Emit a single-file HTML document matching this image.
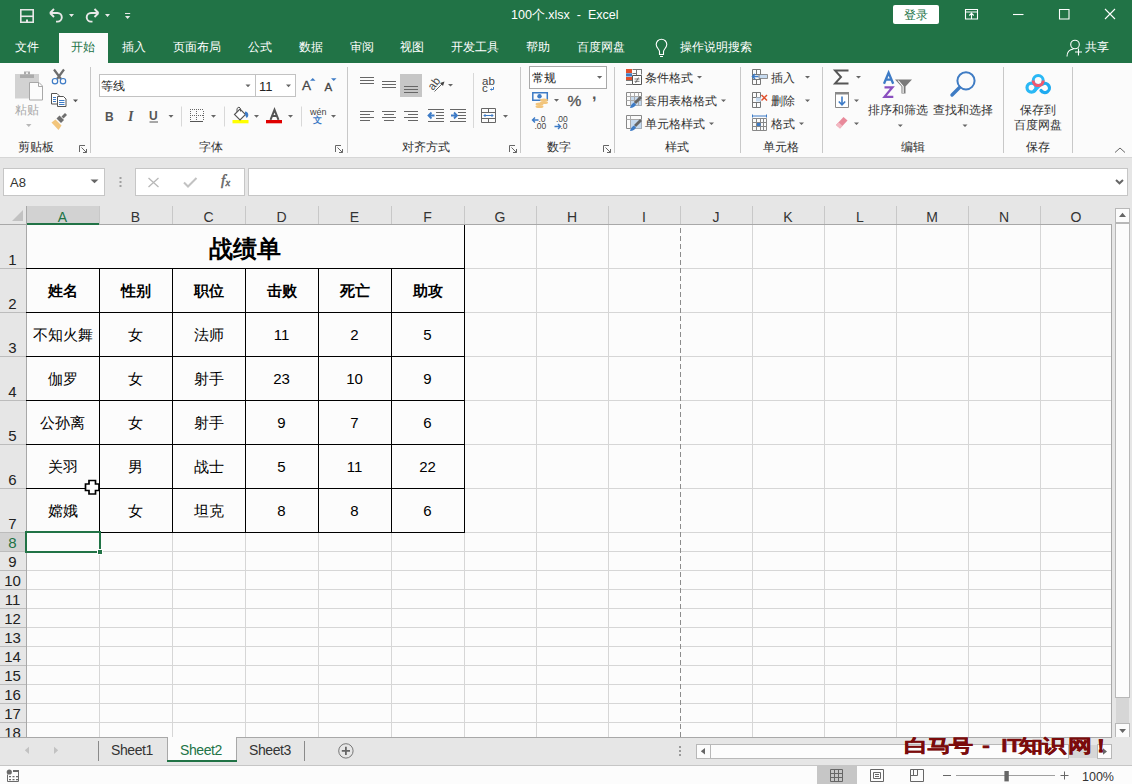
<!DOCTYPE html><html><head><meta charset="utf-8"><style>
*{margin:0;padding:0;box-sizing:border-box}
html,body{width:1132px;height:784px;overflow:hidden;background:#fff;font-family:"Liberation Sans",sans-serif}
body>div, body>svg{position:absolute}
.t{white-space:nowrap;font-size:12px;line-height:12px;color:#444}
.w{color:#fff}
svg{position:absolute;overflow:visible}
</style></head><body>
<div style="left:0px;top:0px;width:1132px;height:63px;background:#217346"></div>
<div style="left:59px;top:33px;width:49px;height:30px;background:#fbfbfb"></div>
<div class="t w" style="left:511px;top:9px;font-size:12.5px;line-height:13px">100个.xlsx&nbsp; -&nbsp; Excel</div>
<div class="t w" style="left:15px;top:41px;">文件</div>
<div class="t w" style="left:122px;top:41px;">插入</div>
<div class="t w" style="left:173px;top:41px;">页面布局</div>
<div class="t w" style="left:248px;top:41px;">公式</div>
<div class="t w" style="left:299px;top:41px;">数据</div>
<div class="t w" style="left:350px;top:41px;">审阅</div>
<div class="t w" style="left:400px;top:41px;">视图</div>
<div class="t w" style="left:451px;top:41px;">开发工具</div>
<div class="t w" style="left:526px;top:41px;">帮助</div>
<div class="t w" style="left:577px;top:41px;">百度网盘</div>
<div class="t w" style="left:680px;top:41px;">操作说明搜索</div>
<div class="t w" style="left:1085px;top:41px;">共享</div>
<div class="t " style="left:71px;top:41px;color:#217346">开始</div>
<svg style="left:0;top:0" width="140" height="30"><path d="M20.8 9.8h12.4v12.4h-12.4z" fill="none" stroke="#e8e8e8" stroke-width="1.6"/><path d="M21 15.5h12v1.6h-12z" fill="#e8e8e8"/><path d="M26 19.5h2v2.7h-2z" fill="#e8e8e8"/><path d="M50 13l4-4M50 13l4 4M50.5 13h7a4.3 4.3 0 0 1 0 8.6h-1.5" fill="none" stroke="#e8e8e8" stroke-width="1.9"/><path d="M98.5 13l-4-4M98.5 13l-4 4M98 13h-7a4.3 4.3 0 0 0 0 8.6h1.5" fill="none" stroke="#e8e8e8" stroke-width="1.9"/><path d="M69 14h5l-2.5 3z M105 14h5l-2.5 3z M125 16h5.2l-2.6 3z" fill="#e8e8e8"/><path d="M125 13.5h5.2" stroke="#e8e8e8" stroke-width="1"/></svg>
<svg style="left:640px;top:0" width="492" height="63"><g fill="none" stroke="#fff" stroke-width="1.1"><path d="M325.5 9.5h12v9.5h-12zM325.5 12h12M331.5 18.5v-5M329.3 15.5l2.2-2.2 2.2 2.2"/><path d="M373 14.5h10.5"/><path d="M419.5 9.5h9.5v9.5h-9.5z"/><path d="M465 9l10 10M475 9l-10 10"/><circle cx="435" cy="44.5" r="4.3"/><path d="M427 56.5c0-4.5 2.5-7 6.5-7.5M438.5 48.5v7M435 52h7"/><path d="M19.5 54.5v-3c0-2-3.3-4-3.3-7a5.3 5.3 0 0 1 10.6 0c0 3-3.3 5-3.3 7v3zM20 56.5h3"/></g></svg>
<div style="left:893px;top:5px;width:46px;height:19px;background:#fff;border-radius:2px"></div>
<div class="t " style="left:904px;top:9px;color:#217346">登录</div>
<div style="left:0px;top:63px;width:1132px;height:94px;background:#fbfbfb"></div>
<div style="left:0px;top:157px;width:1132px;height:1px;background:#d6d6d6"></div>
<div style="left:90px;top:67px;width:1px;height:86px;background:#c8c8c8"></div>
<div style="left:347px;top:67px;width:1px;height:86px;background:#c8c8c8"></div>
<div style="left:520px;top:67px;width:1px;height:86px;background:#c8c8c8"></div>
<div style="left:614px;top:67px;width:1px;height:86px;background:#c8c8c8"></div>
<div style="left:740px;top:67px;width:1px;height:86px;background:#c8c8c8"></div>
<div style="left:822px;top:67px;width:1px;height:86px;background:#c8c8c8"></div>
<div style="left:1003px;top:67px;width:1px;height:86px;background:#c8c8c8"></div>
<div style="left:1072px;top:67px;width:1px;height:86px;background:#c8c8c8"></div>
<div class="t " style="left:18px;top:141px;color:#303030">剪贴板</div>
<div class="t " style="left:199px;top:141px;color:#303030">字体</div>
<div class="t " style="left:402px;top:141px;color:#303030">对齐方式</div>
<div class="t " style="left:547px;top:141px;color:#303030">数字</div>
<div class="t " style="left:665px;top:141px;color:#303030">样式</div>
<div class="t " style="left:763px;top:141px;color:#303030">单元格</div>
<div class="t " style="left:901px;top:141px;color:#303030">编辑</div>
<div class="t " style="left:1026px;top:141px;color:#303030">保存</div>
<svg style="left:0;top:63px" width="90" height="94"><g transform="translate(0,-63)"><path d="M15 74h24v24.5h-24z" fill="#d2d2d2"/><path d="M20 74.5h14v3.5h-14z" fill="#ababab"/><path d="M24 71.5h6v3h-6z" fill="#ababab"/><path d="M26 72.3h2v1.6h-2z" fill="#f0f0f0"/><path d="M29.5 82.5h9.5l3.5 3.5v14h-13z" fill="#fcfcfc" stroke="#a8a8a8" stroke-width="1"/><path d="M38.5 82.5v4h4" fill="none" stroke="#a8a8a8"/><path d="M26 124h5.5l-2.75 3z" fill="#b8b8b8"/><path d="M54 69.5l7 9.5M64 69.5l-7 9.5" stroke="#6d6d6d" stroke-width="2.2"/><circle cx="55" cy="81.2" r="2.7" fill="none" stroke="#3d7bc6" stroke-width="1.2"/><circle cx="63" cy="81.2" r="2.7" fill="none" stroke="#3d7bc6" stroke-width="1.2"/><path d="M51.5 93.5h5.5l2 2v8.5h-7.5z" fill="#fff" stroke="#555"/><path d="M53 97.5h3M53 99.5h3M53 101.5h3" stroke="#3d7bc6"/><path d="M57.5 96.5h6l2.5 2.5v7.5h-8.5z" fill="#fff" stroke="#555"/><path d="M59 100.5h5.5M59 102.5h5.5M59 104.5h5.5" stroke="#3d7bc6"/><path d="M73 99.5h5l-2.5 2.8z" fill="#555"/><path d="M51.5 122.5l4-3 6 6-3 4.5z" fill="#f2c57c"/><path d="M56.5 118.5l3-3 4.5 4.5-3 3z" fill="#6f6f6f"/><path d="M61.5 116.5l3.5-3.5 2 2-3.5 3.5z" fill="#6f6f6f"/></g></svg>
<div class="t " style="left:15px;top:104px;color:#a8a8a8">粘贴</div>
<div style="left:99px;top:74px;width:197px;height:23px;background:#fff;border:1px solid #c2c2c2"></div>
<div style="left:255px;top:74px;width:1px;height:23px;background:#c2c2c2"></div>
<div class="t " style="left:101px;top:80px;color:#222">等线</div>
<div class="t " style="left:259px;top:80px;font-size:13px;line-height:13px;color:#222">11</div>
<svg style="left:0;top:0" width="360" height="160"><path d="M245.5 84.5h5l-2.5 2.8zM286 84.5h5l-2.5 2.8zM168.5 115h5l-2.5 2.8zM211 115h5l-2.5 2.8zM254 115h5l-2.5 2.8zM288 115h5l-2.5 2.8zM331 115h5l-2.5 2.8z" fill="#666"/><path d="M310 80.8h5.5l-2.75-2.8z" fill="#3d7bc6"/><path d="M331 78.2h5.5l-2.75 2.8z" fill="#3d7bc6"/><path d="M181.5 106.5v20M224.5 106.5v20M301.5 106.5v20" stroke="#d8d8d8"/><path d="M190 109.5h14M190 115.5h14M190.5 111v10M196.5 111v4M196.5 117v4M203.5 111v10" stroke="#666" stroke-dasharray="1 1"/><path d="M190 121.5h13" stroke="#555"/><path d="M232.5 120h16v3.3h-16zM266 120h16v3.3h-16z" fill="none"/><rect x="232.5" y="120" width="16" height="3.3" fill="#ffff00"/><rect x="266" y="120" width="16" height="3.3" fill="#e00000"/><path d="M234.5 114.5l5.5-5.5 5.5 5.5-5.5 5.5z" fill="#fff" stroke="#555" stroke-width="1.1"/><path d="M237 112v-3.5l2-1.5 1.5 1.5v3" fill="none" stroke="#555" stroke-width="1"/><path d="M245 111.5c2 0 3.3 1.5 3.3 3.5 0 1.5-1 2.5-1.8 3l-1.5-3.5z" fill="#3d7bc6"/><path d="M270.5 119.8l4-10 4 10M272 116h5" fill="none" stroke="#555" stroke-width="2"/><path d="M149.5 122h8.5" stroke="#555" stroke-width="1"/></svg>
<div class="t " style="left:105px;top:111px;font-size:12px;line-height:12px;font-weight:bold;color:#555">B</div>
<div class="t " style="left:128px;top:110px;font-family:Liberation Serif,serif;font-style:italic;font-size:14px;line-height:13px;font-weight:bold;color:#555">I</div>
<div class="t " style="left:149px;top:110px;font-size:12px;line-height:12px;font-weight:bold;color:#555">U</div>
<div class="t " style="left:302px;top:79px;font-size:13.5px;line-height:13.5px;color:#444;-webkit-text-stroke:0.3px #444">A</div>
<div class="t " style="left:324.5px;top:82px;font-size:11.5px;line-height:11.5px;color:#444;-webkit-text-stroke:0.3px #444">A</div>
<div class="t " style="left:310px;top:108px;font-size:9px;line-height:9px;color:#444">wén</div>
<div class="t " style="left:313px;top:116px;font-size:8.5px;line-height:8.5px;color:#3d7bc6;font-weight:bold">文</div>
<div style="left:400px;top:74px;width:22px;height:23px;background:#c6c6c6"></div>
<svg style="left:0;top:0" width="620" height="160"><g stroke="#666" stroke-width="1" fill="none"><path d="M360 77.5h14M360 80.5h14M360 83.5h14"/><path d="M382 81.5h14M382 84.5h14M382 87.5h14"/><path d="M404 86.5h14M404 89.5h14M404 92.5h14"/><path d="M360 111.5h14M360 114.5h10M360 117.5h14M360 120.5h10"/><path d="M382 111.5h14M384 114.5h10M382 117.5h14M384 120.5h10"/><path d="M404 111.5h14M408 114.5h10M404 117.5h14M408 120.5h10"/><path d="M428 109.5h16M436 112.5h8M436 115.5h8M436 118.5h8M428 121.5h16"/><path d="M450 109.5h16M458 112.5h8M458 115.5h8M458 118.5h8M450 121.5h16"/><path d="M481.5 108.5h14v14h-14zM481.5 112.5h14M481.5 118.5h14M488.5 108.5v4M488.5 118.5v4"/><path d="M434.5 91.5l9.5-9.5"/><path d="M473.5 73v55" stroke="#d8d8d8"/></g><path d="M428.5 115.5h6M431.5 112.5l-3 3 3 3M451 115.5h6M454 112.5l3 3-3 3" fill="none" stroke="#3d7bc6" stroke-width="1.8"/><path d="M484 115.5h9M485.5 114l-1.5 1.5 1.5 1.5M491.5 114l1.5 1.5-1.5 1.5" fill="none" stroke="#3d7bc6" stroke-width="1"/><path d="M493.5 87v2.5h-3M491.5 88.5l-1 1 1 1" fill="none" stroke="#3d7bc6" stroke-width="1"/><path d="M444.5 81.5l-1.5 4.5-3-3z" fill="#444"/><path d="M448 84h5l-2.5 2.5zM503 115h5l-2.5 2.8z" fill="#666"/><text x="0" y="0" transform="translate(433,91) rotate(-52)" font-size="11.5" font-family="Liberation Sans" fill="#444">ab</text></svg>
<div class="t " style="left:482px;top:76px;font-size:11.5px;line-height:11.5px;color:#444">ab</div>
<div class="t " style="left:482px;top:83px;font-size:11.5px;line-height:11.5px;color:#444">c</div>
<div style="left:529px;top:66px;width:78px;height:23px;background:#fff;border:1px solid #a9a9a9"></div>
<div class="t " style="left:532px;top:72px;color:#222">常规</div>
<svg style="left:0;top:0" width="620" height="160"><path d="M597 76h5.2l-2.6 2.8zM554 99h5l-2.5 2.8z" fill="#666"/><path d="M532.8 92.8h14.5v7.5h-14.5z" fill="none" stroke="#3d7bc6" stroke-width="1.5"/><circle cx="539.5" cy="96.3" r="2.2" fill="#3d7bc6"/><ellipse cx="544" cy="100" rx="4" ry="1.6" fill="#f2c57c"/><ellipse cx="544" cy="102.5" rx="4" ry="1.6" fill="#f2c57c"/><ellipse cx="539.5" cy="104" rx="4" ry="1.6" fill="#f2c57c"/><ellipse cx="539.5" cy="106.5" rx="4" ry="1.5" fill="#f2c57c"/><path d="M532.5 120h6M535 117.5l-2.5 2.5 2.5 2.5M554.5 126.5h6M558 124l2.5 2.5-2.5 2.5" fill="none" stroke="#3d7bc6" stroke-width="1.4"/></svg>
<div class="t " style="left:567.5px;top:93px;font-size:15.5px;line-height:15px;color:#555;-webkit-text-stroke:0.35px #555">%</div>
<div class="t " style="left:592px;top:86px;font-size:16px;line-height:16px;color:#555;font-weight:bold">,</div>
<div class="t " style="left:538.5px;top:115px;font-size:8.5px;line-height:8.5px;color:#444">.0</div>
<div class="t " style="left:534.5px;top:122px;font-size:8.5px;line-height:8.5px;color:#444">.00</div>
<div class="t " style="left:556px;top:115px;font-size:8.5px;line-height:8.5px;color:#444">.00</div>
<div class="t " style="left:560.5px;top:122px;font-size:8.5px;line-height:8.5px;color:#444">.0</div>
<div class="t " style="left:645px;top:72px;color:#333">条件格式</div>
<div class="t " style="left:645px;top:95px;color:#333">套用表格格式</div>
<div class="t " style="left:645px;top:118px;color:#333">单元格样式</div>
<div class="t " style="left:771px;top:72px;color:#333">插入</div>
<div class="t " style="left:771px;top:95px;color:#333">删除</div>
<div class="t " style="left:771px;top:118px;color:#333">格式</div>
<svg style="left:0;top:0" width="880" height="160"><path d="M697 76h5l-2.5 2.5zM721 99.5h5l-2.5 2.5zM709 122.5h5l-2.5 2.5zM805 76h5l-2.5 2.5zM805 99.5h5l-2.5 2.5zM799 122.5h5l-2.5 2.5zM856 76h5l-2.5 2.5zM854 99.5h5l-2.5 2.5zM854 122.5h5l-2.5 2.5z" fill="#666"/><path d="M626 69h6v4h-6zM626 77h6v3.5h-6z" fill="#e0502d"/><path d="M626 73.3h6v3.2h-6z" fill="#3d7bc6"/><path d="M632.5 69.5h9M632.5 73.5h4M636.5 69v6M641.5 69v5.5M626 80.5h6M626 84.5h6" fill="none" stroke="#777"/><path d="M632.5 75.5h9v9h-9z" fill="#fff" stroke="#555"/><path d="M634.5 79h5M634.5 81.3h5M638.5 77.5l-3 5.5" stroke="#555" stroke-width="0.8"/><path d="M626.5 92.5h15v13h-15z" fill="none" stroke="#888"/><path d="M630.5 96.5h11v9h-11z" fill="#c5d9ee"/><path d="M626.5 96.5h15M626.5 100.5h15M630.5 92.5v13M634.5 92.5v13M638.5 92.5v13" fill="none" stroke="#aaa"/><path d="M640 96l2 2-6 6-2-2z" fill="#666"/><path d="M634 102.5l2 2c-1 2-3 3.5-6 3.5 0.5-2.5 2-4.5 4-5.5z" fill="#3d7bc6"/><path d="M626.5 115.5h15v13h-15z" fill="none" stroke="#888"/><path d="M630.5 119.5h11v9h-11z" fill="#c5d9ee"/><path d="M626.5 119.5h15M630.5 115.5v13" fill="none" stroke="#aaa"/><path d="M640 119l2 2-6 6-2-2z" fill="#666"/><path d="M634 125.5l2 2c-1 2-3 3.5-6 3.5 0.5-2.5 2-4.5 4-5.5z" fill="#3d7bc6"/><path d="M752.5 69.5h8v15h-8zM752.5 74.5h8M752.5 79.5h8M756.5 69.5v5M756.5 79.5v5" fill="none" stroke="#777"/><path d="M759 74.5h8.5v4h-8.5z" fill="#c5d9ee" stroke="#777" stroke-width="0.8"/><path d="M752.5 76.5h6M755 74l-2.5 2.5 2.5 2.5" fill="none" stroke="#3d7bc6" stroke-width="1.5"/><path d="M752.5 92.5h8v15h-8zM752.5 97.5h8M752.5 102.5h8M756.5 92.5v5M756.5 102.5v5" fill="none" stroke="#777"/><path d="M756 97.5h5v4h-5z" fill="#c5d9ee"/><path d="M761.5 95l5.5 5.5M767 95l-5.5 5.5" stroke="#e0502d" stroke-width="1.5"/><path d="M752.5 118.5h14v12h-14zM752.5 122.5h14M752.5 126.5h14M756.5 118.5v12M760.5 118.5v12M763.5 118.5v12" fill="none" stroke="#888"/><path d="M757 123h3.5v3h-3.5z" fill="#3d7bc6"/><path d="M752.5 116h14M752.5 114.5v3M766.5 114.5v3" fill="none" stroke="#3d7bc6"/><path d="M848.5 70.5h-13.5l6 6.5-6 6.5h13.5" fill="none" stroke="#555" stroke-width="1.9" stroke-linejoin="miter"/><path d="M835.5 92.5h13v15h-13z" fill="#fff" stroke="#888"/><path d="M835 92h14v2.5h-14z" fill="#888"/><path d="M842 96.5v8M838.8 101.5l3.2 3.3 3.2-3.3" fill="none" stroke="#3d7bc6" stroke-width="1.6"/><path d="M836 125l7.5-8 4 3.5-7.5 8z" fill="#e8899a"/><path d="M836 125l2.5-2.7 4 3.5-2.5 2.7z" fill="#f2b8c2"/></svg>
<div class="t " style="left:868px;top:104px;color:#333">排序和筛选</div>
<div class="t " style="left:933px;top:104px;color:#333">查找和选择</div>
<div class="t " style="left:1020px;top:104px;color:#333">保存到</div>
<div class="t " style="left:1014px;top:119px;color:#333">百度网盘</div>
<svg style="left:0;top:0" width="1132" height="160"><path d="M897.8 124.5h5l-2.5 2.5zM962.5 124.5h5l-2.5 2.5z" fill="#666"/><path d="M884 83.7l4.6-11 4.6 11M885.8 79.6h5.6" fill="none" stroke="#3d7bc6" stroke-width="2.3"/><path d="M884.5 87.3h8l-8 9.5h8.8" fill="none" stroke="#8a4fbf" stroke-width="2.2"/><path d="M895 79.5h17l-6.5 7v7h-4v-7z" fill="#7a7a7a"/><path d="M897.5 80.5l5 6v6.5h1.2v-6.8l-5-5.7z" fill="#fff"/><circle cx="966" cy="80.8" r="8.6" fill="none" stroke="#3f7cc4" stroke-width="2"/><path d="M959.5 87.5l-7.5 7.5" stroke="#3f7cc4" stroke-width="3.4" stroke-linecap="round"/><circle cx="1031.5" cy="87.6" r="4.5" fill="none" stroke="#2ab8f5" stroke-width="3.2"/><path d="M1042.5 84a4.6 4.6 0 1 1 -1.5 6.5" fill="none" stroke="#1eaaf0" stroke-width="3.2" stroke-linecap="round"/><path d="M1033.5 91.5l6-6" stroke="#2ab8f5" stroke-width="3.2"/><circle cx="1038.2" cy="80.6" r="5" fill="none" stroke="#2ab8f5" stroke-width="3"/><path d="M1033.2 80.6a5 5 0 0 0 10 0" fill="none" stroke="#f4566c" stroke-width="3"/><path d="M1115 152.5l5-4.5 5 4.5" fill="none" stroke="#666" stroke-width="1"/></svg>
<svg style="left:0;top:0" width="700" height="160"><path d="M79.5 152V145.5h5.5M81.5 147.5l5 5M86.5 149v3.5h-3.5" fill="none" stroke="#666" stroke-width="1"/><path d="M335.5 152V145.5h5.5M337.5 147.5l5 5M342.5 149v3.5h-3.5" fill="none" stroke="#666" stroke-width="1"/><path d="M509.5 152V145.5h5.5M511.5 147.5l5 5M516.5 149v3.5h-3.5" fill="none" stroke="#666" stroke-width="1"/><path d="M603.5 152V145.5h5.5M605.5 147.5l5 5M610.5 149v3.5h-3.5" fill="none" stroke="#666" stroke-width="1"/></svg>
<div style="left:0px;top:158px;width:1132px;height:48px;background:#e6e6e6"></div>
<div style="left:3px;top:168px;width:102px;height:28px;background:#fff;border:1px solid #c6c6c6"></div>
<div class="t " style="left:10px;top:176px;font-size:13px;line-height:13px;color:#333">A8</div>
<div style="left:135px;top:168px;width:110px;height:28px;background:#fff;border:1px solid #c6c6c6"></div>
<div style="left:248px;top:168px;width:880px;height:28px;background:#fff;border:1px solid #c6c6c6"></div>
<svg style="left:0;top:158px" width="1132" height="48"><g transform="translate(0,-158)"><path d="M90.5 179.5h8l-4 3.8z" fill="#666"/><path d="M119.5 177h2v2h-2zM119.5 181h2v2h-2zM119.5 185h2v2h-2z" fill="#a0a0a0"/><path d="M148.5 178l10 9M158.5 178l-10 9" stroke="#b8b8b8" stroke-width="1.3"/><path d="M184 182.5l4 4 8.5-8.5" fill="none" stroke="#c2c2c2" stroke-width="2"/><path d="M1116 180l3.5 3.3 3.5-3.3" fill="none" stroke="#666" stroke-width="2"/></g></svg>
<div class="t " style="left:221px;top:173px;font-family:Liberation Serif,serif;font-style:italic;font-size:15px;line-height:14px;color:#666;-webkit-text-stroke:0.5px #666">f</div>
<div class="t " style="left:225.5px;top:177.5px;font-family:Liberation Serif,serif;font-style:italic;font-size:10.5px;line-height:10px;color:#666;-webkit-text-stroke:0.4px #666">x</div>
<div style="left:0px;top:206px;width:1132px;height:19px;background:#e6e6e6"></div>
<div style="left:0px;top:225px;width:26px;height:512px;background:#e6e6e6"></div>
<div style="left:26px;top:225px;width:1086px;height:512px;background:#fcfcfc"></div>
<div style="left:99px;top:269px;width:1px;height:468px;background:#d6d6d6"></div>
<div style="left:99px;top:206px;width:1px;height:18px;background:#c8c8c8"></div>
<div style="left:172px;top:269px;width:1px;height:468px;background:#d6d6d6"></div>
<div style="left:172px;top:206px;width:1px;height:18px;background:#c8c8c8"></div>
<div style="left:245px;top:269px;width:1px;height:468px;background:#d6d6d6"></div>
<div style="left:245px;top:206px;width:1px;height:18px;background:#c8c8c8"></div>
<div style="left:318px;top:269px;width:1px;height:468px;background:#d6d6d6"></div>
<div style="left:318px;top:206px;width:1px;height:18px;background:#c8c8c8"></div>
<div style="left:391px;top:269px;width:1px;height:468px;background:#d6d6d6"></div>
<div style="left:391px;top:206px;width:1px;height:18px;background:#c8c8c8"></div>
<div style="left:464px;top:269px;width:1px;height:468px;background:#d6d6d6"></div>
<div style="left:464px;top:206px;width:1px;height:18px;background:#c8c8c8"></div>
<div style="left:536px;top:225px;width:1px;height:512px;background:#d6d6d6"></div>
<div style="left:536px;top:206px;width:1px;height:18px;background:#c8c8c8"></div>
<div style="left:608px;top:225px;width:1px;height:512px;background:#d6d6d6"></div>
<div style="left:608px;top:206px;width:1px;height:18px;background:#c8c8c8"></div>
<div style="left:680px;top:206px;width:1px;height:18px;background:#c8c8c8"></div>
<div style="left:752px;top:225px;width:1px;height:512px;background:#d6d6d6"></div>
<div style="left:752px;top:206px;width:1px;height:18px;background:#c8c8c8"></div>
<div style="left:824px;top:225px;width:1px;height:512px;background:#d6d6d6"></div>
<div style="left:824px;top:206px;width:1px;height:18px;background:#c8c8c8"></div>
<div style="left:896px;top:225px;width:1px;height:512px;background:#d6d6d6"></div>
<div style="left:896px;top:206px;width:1px;height:18px;background:#c8c8c8"></div>
<div style="left:968px;top:225px;width:1px;height:512px;background:#d6d6d6"></div>
<div style="left:968px;top:206px;width:1px;height:18px;background:#c8c8c8"></div>
<div style="left:1040px;top:225px;width:1px;height:512px;background:#d6d6d6"></div>
<div style="left:1040px;top:206px;width:1px;height:18px;background:#c8c8c8"></div>
<div style="left:1112px;top:225px;width:1px;height:512px;background:#d6d6d6"></div>
<div style="left:1112px;top:206px;width:1px;height:18px;background:#c8c8c8"></div>
<div style="left:26px;top:268px;width:1086px;height:1px;background:#d6d6d6"></div>
<div style="left:0px;top:268px;width:26px;height:1px;background:#bcbcbc"></div>
<div style="left:26px;top:312px;width:1086px;height:1px;background:#d6d6d6"></div>
<div style="left:0px;top:312px;width:26px;height:1px;background:#bcbcbc"></div>
<div style="left:26px;top:356px;width:1086px;height:1px;background:#d6d6d6"></div>
<div style="left:0px;top:356px;width:26px;height:1px;background:#bcbcbc"></div>
<div style="left:26px;top:400px;width:1086px;height:1px;background:#d6d6d6"></div>
<div style="left:0px;top:400px;width:26px;height:1px;background:#bcbcbc"></div>
<div style="left:26px;top:444px;width:1086px;height:1px;background:#d6d6d6"></div>
<div style="left:0px;top:444px;width:26px;height:1px;background:#bcbcbc"></div>
<div style="left:26px;top:488px;width:1086px;height:1px;background:#d6d6d6"></div>
<div style="left:0px;top:488px;width:26px;height:1px;background:#bcbcbc"></div>
<div style="left:26px;top:532px;width:1086px;height:1px;background:#d6d6d6"></div>
<div style="left:0px;top:532px;width:26px;height:1px;background:#bcbcbc"></div>
<div style="left:26px;top:551px;width:1086px;height:1px;background:#d6d6d6"></div>
<div style="left:0px;top:551px;width:26px;height:1px;background:#bcbcbc"></div>
<div style="left:26px;top:570px;width:1086px;height:1px;background:#d6d6d6"></div>
<div style="left:0px;top:570px;width:26px;height:1px;background:#bcbcbc"></div>
<div style="left:26px;top:589px;width:1086px;height:1px;background:#d6d6d6"></div>
<div style="left:0px;top:589px;width:26px;height:1px;background:#bcbcbc"></div>
<div style="left:26px;top:608px;width:1086px;height:1px;background:#d6d6d6"></div>
<div style="left:0px;top:608px;width:26px;height:1px;background:#bcbcbc"></div>
<div style="left:26px;top:627px;width:1086px;height:1px;background:#d6d6d6"></div>
<div style="left:0px;top:627px;width:26px;height:1px;background:#bcbcbc"></div>
<div style="left:26px;top:646px;width:1086px;height:1px;background:#d6d6d6"></div>
<div style="left:0px;top:646px;width:26px;height:1px;background:#bcbcbc"></div>
<div style="left:26px;top:665px;width:1086px;height:1px;background:#d6d6d6"></div>
<div style="left:0px;top:665px;width:26px;height:1px;background:#bcbcbc"></div>
<div style="left:26px;top:684px;width:1086px;height:1px;background:#d6d6d6"></div>
<div style="left:0px;top:684px;width:26px;height:1px;background:#bcbcbc"></div>
<div style="left:26px;top:703px;width:1086px;height:1px;background:#d6d6d6"></div>
<div style="left:0px;top:703px;width:26px;height:1px;background:#bcbcbc"></div>
<div style="left:26px;top:722px;width:1086px;height:1px;background:#d6d6d6"></div>
<div style="left:0px;top:722px;width:26px;height:1px;background:#bcbcbc"></div>
<div style="left:0px;top:224px;width:1112px;height:1px;background:#a8a8a8"></div>
<div style="left:26px;top:206px;width:1px;height:531px;background:#a8a8a8"></div>
<svg style="left:0;top:206px" width="26" height="18"><path d="M23 4v11h-11z" fill="#c2c2c2"/></svg>
<div style="left:27px;top:206px;width:72px;height:18px;background:#d2d2d2"></div>
<div style="left:27px;top:223px;width:72px;height:2px;background:#217346"></div>
<div style="left:0px;top:533px;width:26px;height:18px;background:#d2d2d2"></div>
<div class="t" style="left:26px;top:209.5px;width:73px;text-align:center;font-size:14px;line-height:14px;color:#217346">A</div>
<div class="t" style="left:99px;top:209.5px;width:73px;text-align:center;font-size:14px;line-height:14px;color:#333">B</div>
<div class="t" style="left:172px;top:209.5px;width:73px;text-align:center;font-size:14px;line-height:14px;color:#333">C</div>
<div class="t" style="left:245px;top:209.5px;width:73px;text-align:center;font-size:14px;line-height:14px;color:#333">D</div>
<div class="t" style="left:318px;top:209.5px;width:73px;text-align:center;font-size:14px;line-height:14px;color:#333">E</div>
<div class="t" style="left:391px;top:209.5px;width:73px;text-align:center;font-size:14px;line-height:14px;color:#333">F</div>
<div class="t" style="left:464px;top:209.5px;width:72px;text-align:center;font-size:14px;line-height:14px;color:#333">G</div>
<div class="t" style="left:536px;top:209.5px;width:72px;text-align:center;font-size:14px;line-height:14px;color:#333">H</div>
<div class="t" style="left:608px;top:209.5px;width:72px;text-align:center;font-size:14px;line-height:14px;color:#333">I</div>
<div class="t" style="left:680px;top:209.5px;width:72px;text-align:center;font-size:14px;line-height:14px;color:#333">J</div>
<div class="t" style="left:752px;top:209.5px;width:72px;text-align:center;font-size:14px;line-height:14px;color:#333">K</div>
<div class="t" style="left:824px;top:209.5px;width:72px;text-align:center;font-size:14px;line-height:14px;color:#333">L</div>
<div class="t" style="left:896px;top:209.5px;width:72px;text-align:center;font-size:14px;line-height:14px;color:#333">M</div>
<div class="t" style="left:968px;top:209.5px;width:72px;text-align:center;font-size:14px;line-height:14px;color:#333">N</div>
<div class="t" style="left:1040px;top:209.5px;width:72px;text-align:center;font-size:14px;line-height:14px;color:#333">O</div>
<div class="t" style="left:0px;top:252px;width:25px;text-align:center;font-size:15px;line-height:15px;color:#222">1</div>
<div class="t" style="left:0px;top:296px;width:25px;text-align:center;font-size:15px;line-height:15px;color:#222">2</div>
<div class="t" style="left:0px;top:340px;width:25px;text-align:center;font-size:15px;line-height:15px;color:#222">3</div>
<div class="t" style="left:0px;top:384px;width:25px;text-align:center;font-size:15px;line-height:15px;color:#222">4</div>
<div class="t" style="left:0px;top:428px;width:25px;text-align:center;font-size:15px;line-height:15px;color:#222">5</div>
<div class="t" style="left:0px;top:472px;width:25px;text-align:center;font-size:15px;line-height:15px;color:#222">6</div>
<div class="t" style="left:0px;top:516px;width:25px;text-align:center;font-size:15px;line-height:15px;color:#222">7</div>
<div class="t" style="left:0px;top:535px;width:25px;text-align:center;font-size:15px;line-height:15px;color:#217346">8</div>
<div class="t" style="left:0px;top:554px;width:25px;text-align:center;font-size:15px;line-height:15px;color:#222">9</div>
<div class="t" style="left:0px;top:573px;width:25px;text-align:center;font-size:15px;line-height:15px;color:#222">10</div>
<div class="t" style="left:0px;top:592px;width:25px;text-align:center;font-size:15px;line-height:15px;color:#222">11</div>
<div class="t" style="left:0px;top:611px;width:25px;text-align:center;font-size:15px;line-height:15px;color:#222">12</div>
<div class="t" style="left:0px;top:630px;width:25px;text-align:center;font-size:15px;line-height:15px;color:#222">13</div>
<div class="t" style="left:0px;top:649px;width:25px;text-align:center;font-size:15px;line-height:15px;color:#222">14</div>
<div class="t" style="left:0px;top:668px;width:25px;text-align:center;font-size:15px;line-height:15px;color:#222">15</div>
<div class="t" style="left:0px;top:687px;width:25px;text-align:center;font-size:15px;line-height:15px;color:#222">16</div>
<div class="t" style="left:0px;top:706px;width:25px;text-align:center;font-size:15px;line-height:15px;color:#222">17</div>
<div class="t" style="left:0px;top:725px;width:25px;text-align:center;font-size:15px;line-height:15px;color:#222">18</div>
<div style="left:26px;top:268px;width:439px;height:1px;background:#000"></div>
<div style="left:26px;top:312px;width:439px;height:1px;background:#000"></div>
<div style="left:26px;top:356px;width:439px;height:1px;background:#000"></div>
<div style="left:26px;top:400px;width:439px;height:1px;background:#000"></div>
<div style="left:26px;top:444px;width:439px;height:1px;background:#000"></div>
<div style="left:26px;top:488px;width:439px;height:1px;background:#000"></div>
<div style="left:26px;top:532px;width:439px;height:1px;background:#000"></div>
<div style="left:464px;top:225px;width:1px;height:308px;background:#000"></div>
<div style="left:99px;top:268px;width:1px;height:265px;background:#000"></div>
<div style="left:172px;top:268px;width:1px;height:265px;background:#000"></div>
<div style="left:245px;top:268px;width:1px;height:265px;background:#000"></div>
<div style="left:318px;top:268px;width:1px;height:265px;background:#000"></div>
<div style="left:391px;top:268px;width:1px;height:265px;background:#000"></div>
<div class="t " style="left:26px;top:236.5px;width:438px;text-align:center;font-size:24px;line-height:24px;font-weight:bold;color:#000">战绩单</div>
<div class="t" style="left:26px;top:283px;width:73px;text-align:center;font-size:15px;line-height:15px;color:#000;font-weight:bold;">姓名</div>
<div class="t" style="left:99px;top:283px;width:73px;text-align:center;font-size:15px;line-height:15px;color:#000;font-weight:bold;">性别</div>
<div class="t" style="left:172px;top:283px;width:73px;text-align:center;font-size:15px;line-height:15px;color:#000;font-weight:bold;">职位</div>
<div class="t" style="left:245px;top:283px;width:73px;text-align:center;font-size:15px;line-height:15px;color:#000;font-weight:bold;">击败</div>
<div class="t" style="left:318px;top:283px;width:73px;text-align:center;font-size:15px;line-height:15px;color:#000;font-weight:bold;">死亡</div>
<div class="t" style="left:391px;top:283px;width:73px;text-align:center;font-size:15px;line-height:15px;color:#000;font-weight:bold;">助攻</div>
<div class="t" style="left:26px;top:327px;width:73px;text-align:center;font-size:15px;line-height:15px;color:#000;">不知火舞</div>
<div class="t" style="left:99px;top:327px;width:73px;text-align:center;font-size:15px;line-height:15px;color:#000;">女</div>
<div class="t" style="left:172px;top:327px;width:73px;text-align:center;font-size:15px;line-height:15px;color:#000;">法师</div>
<div class="t" style="left:245px;top:327px;width:73px;text-align:center;font-size:15px;line-height:15px;color:#000;">11</div>
<div class="t" style="left:318px;top:327px;width:73px;text-align:center;font-size:15px;line-height:15px;color:#000;">2</div>
<div class="t" style="left:391px;top:327px;width:73px;text-align:center;font-size:15px;line-height:15px;color:#000;">5</div>
<div class="t" style="left:26px;top:371px;width:73px;text-align:center;font-size:15px;line-height:15px;color:#000;">伽罗</div>
<div class="t" style="left:99px;top:371px;width:73px;text-align:center;font-size:15px;line-height:15px;color:#000;">女</div>
<div class="t" style="left:172px;top:371px;width:73px;text-align:center;font-size:15px;line-height:15px;color:#000;">射手</div>
<div class="t" style="left:245px;top:371px;width:73px;text-align:center;font-size:15px;line-height:15px;color:#000;">23</div>
<div class="t" style="left:318px;top:371px;width:73px;text-align:center;font-size:15px;line-height:15px;color:#000;">10</div>
<div class="t" style="left:391px;top:371px;width:73px;text-align:center;font-size:15px;line-height:15px;color:#000;">9</div>
<div class="t" style="left:26px;top:415px;width:73px;text-align:center;font-size:15px;line-height:15px;color:#000;">公孙离</div>
<div class="t" style="left:99px;top:415px;width:73px;text-align:center;font-size:15px;line-height:15px;color:#000;">女</div>
<div class="t" style="left:172px;top:415px;width:73px;text-align:center;font-size:15px;line-height:15px;color:#000;">射手</div>
<div class="t" style="left:245px;top:415px;width:73px;text-align:center;font-size:15px;line-height:15px;color:#000;">9</div>
<div class="t" style="left:318px;top:415px;width:73px;text-align:center;font-size:15px;line-height:15px;color:#000;">7</div>
<div class="t" style="left:391px;top:415px;width:73px;text-align:center;font-size:15px;line-height:15px;color:#000;">6</div>
<div class="t" style="left:26px;top:459px;width:73px;text-align:center;font-size:15px;line-height:15px;color:#000;">关羽</div>
<div class="t" style="left:99px;top:459px;width:73px;text-align:center;font-size:15px;line-height:15px;color:#000;">男</div>
<div class="t" style="left:172px;top:459px;width:73px;text-align:center;font-size:15px;line-height:15px;color:#000;">战士</div>
<div class="t" style="left:245px;top:459px;width:73px;text-align:center;font-size:15px;line-height:15px;color:#000;">5</div>
<div class="t" style="left:318px;top:459px;width:73px;text-align:center;font-size:15px;line-height:15px;color:#000;">11</div>
<div class="t" style="left:391px;top:459px;width:73px;text-align:center;font-size:15px;line-height:15px;color:#000;">22</div>
<div class="t" style="left:26px;top:503px;width:73px;text-align:center;font-size:15px;line-height:15px;color:#000;">嫦娥</div>
<div class="t" style="left:99px;top:503px;width:73px;text-align:center;font-size:15px;line-height:15px;color:#000;">女</div>
<div class="t" style="left:172px;top:503px;width:73px;text-align:center;font-size:15px;line-height:15px;color:#000;">坦克</div>
<div class="t" style="left:245px;top:503px;width:73px;text-align:center;font-size:15px;line-height:15px;color:#000;">8</div>
<div class="t" style="left:318px;top:503px;width:73px;text-align:center;font-size:15px;line-height:15px;color:#000;">8</div>
<div class="t" style="left:391px;top:503px;width:73px;text-align:center;font-size:15px;line-height:15px;color:#000;">6</div>
<div style="left:25px;top:531px;width:76px;height:22px;border:2px solid #217346"></div>
<div style="left:97px;top:549px;width:6px;height:6px;background:#217346;border:1px solid #fff"></div>
<svg style="left:84px;top:479px" width="17" height="17"><path d="M5 1.5h6.5v3.5h3.5v6.5h-3.5v3.5h-6.5v-3.5h-3.5v-6.5h3.5z" fill="#fff" stroke="#000" stroke-width="1.7" stroke-linejoin="miter"/></svg>
<svg style="left:680px;top:225px" width="1" height="512"><path d="M0.5 3V512" stroke="#8c8c8c" stroke-width="1" stroke-dasharray="5 3"/></svg>
<div style="left:1112px;top:206px;width:20px;height:531px;background:#e6e6e6"></div>
<div style="left:1111px;top:225px;width:1px;height:512px;background:#a8a8a8"></div>
<div style="left:1115px;top:208px;width:15px;height:15px;background:#fcfcfc;border:1px solid #b8b8b8"></div>
<div style="left:1115px;top:223px;width:15px;height:475px;background:#fcfcfc;border:1px solid #b8b8b8"></div>
<div style="left:1116px;top:698px;width:13px;height:26px;background:#d6d6d6"></div>
<div style="left:1115px;top:723px;width:15px;height:15px;background:#fcfcfc;border:1px solid #b8b8b8"></div>
<div style="left:0px;top:737px;width:1132px;height:28px;background:#e6e6e6"></div>
<div style="left:0px;top:737px;width:1112px;height:1px;background:#a8a8a8"></div>
<div style="left:0px;top:765px;width:1132px;height:1px;background:#c6c6c6"></div>
<div style="left:167px;top:737px;width:70px;height:25px;background:#fcfcfc"></div>
<div style="left:167px;top:737px;width:1px;height:25px;background:#a8a8a8"></div>
<div style="left:236px;top:737px;width:1px;height:25px;background:#a8a8a8"></div>
<div style="left:167px;top:760px;width:70px;height:2px;background:#217346"></div>
<div class="t " style="left:111px;top:743px;font-size:14px;line-height:14px;color:#333;letter-spacing:-0.4px">Sheet1</div>
<div class="t " style="left:180px;top:743px;font-size:14px;line-height:14px;color:#217346;letter-spacing:-0.4px">Sheet2</div>
<div class="t " style="left:249px;top:743px;font-size:14px;line-height:14px;color:#333;letter-spacing:-0.4px">Sheet3</div>
<div style="left:98px;top:741px;width:1px;height:20px;background:#8a8a8a"></div>
<div style="left:304px;top:741px;width:1px;height:20px;background:#8a8a8a"></div>
<div style="left:0px;top:766px;width:1132px;height:18px;background:#fcfcfc"></div>
<div style="left:696px;top:744px;width:15px;height:15px;background:#fcfcfc;border:1px solid #b8b8b8"></div>
<div style="left:710px;top:744px;width:359px;height:15px;background:#fcfcfc;border:1px solid #b8b8b8"></div>
<div style="left:1069px;top:745px;width:29px;height:13px;background:#d6d6d6"></div>
<div style="left:1097px;top:744px;width:15px;height:15px;background:#fcfcfc;border:1px solid #b8b8b8"></div>
<svg style="left:0;top:700px" width="1132" height="84"><g transform="translate(0,-700)"><path d="M1119 217h7l-3.5-4.2zM1119.2 729h6.8l-3.4 4zM705 748v6.6l-4.2-3.3zM1103 748.2v6.6l4 -3.3z" fill="#666"/><path d="M29 746.7v7.3l-4.2-3.65zM54 746.7v7.3l4.2-3.65z" fill="#c2c2c2"/><path d="M679 746h2v2h-2zM679 750h2v2h-2zM679 754h2v2h-2z" fill="#9a9a9a"/><circle cx="345.9" cy="750.9" r="7.2" fill="none" stroke="#777" stroke-width="1"/><path d="M341.8 750.9h8.2M345.9 746.8v8.2" stroke="#666" stroke-width="1.8"/><circle cx="9.3" cy="772" r="2.6" fill="#6a6a6a"/><path d="M7.5 774.5v7h11v-11h-5" fill="none" stroke="#6a6a6a" stroke-width="1"/><path d="M13 770h6v2h-6z" fill="#6a6a6a"/><path d="M9 776h2v1.2h-2zM12.5 776h2v1.2h-2zM16 776h2v1.2h-2zM9 779h2v1.2h-2zM12.5 779h2v1.2h-2zM16 779h2v1.2h-2z" fill="#6a6a6a"/></g></svg>
<div style="left:817px;top:766px;width:40px;height:18px;background:#c6c6c6"></div>
<svg style="left:800px;top:755px" width="332" height="29"><g transform="translate(-800,-755)" fill="none" stroke="#666" stroke-width="1"><path d="M830.5 769.5h12v12h-12zM834.5 769.5v12M838.5 769.5v12M830.5 773.5h12M830.5 777.5h12"/><path d="M870.5 769.5h13v12h-13zM873.5 772.5h7v6h-7zM875 774.5h4M875 776.5h4"/><path d="M910.5 769.5h13v12h-13zM910.5 775.5h7v-6M913.5 769.5v6"/><path d="M943 775.5h8M1060.5 775.5h8M1064.5 771.5v8"/><path d="M956 775.5h99" stroke="#a0a0a0"/></g><path d="M204.4 16h4.4v10.4h-4.4z" fill="#666"/></svg>
<div class="t " style="left:1082px;top:770.5px;font-size:12.5px;line-height:13px;color:#333">100%</div>
<div class="t " style="left:904px;top:737px;font-size:21px;line-height:21px;font-weight:bold;color:#7b0b0b;-webkit-text-stroke:0.4px #7b0b0b;transform:scale(1.15,0.86);transform-origin:0 0">白</div>
<div class="t " style="left:926.5px;top:737px;font-size:21px;line-height:21px;font-weight:bold;color:#7b0b0b;-webkit-text-stroke:0.4px #7b0b0b;transform:scale(1.15,0.86);transform-origin:0 0">马</div>
<div class="t " style="left:948.5px;top:737px;font-size:21px;line-height:21px;font-weight:bold;color:#7b0b0b;-webkit-text-stroke:0.4px #7b0b0b;transform:scale(1.15,0.86);transform-origin:0 0">号</div>
<div class="t " style="left:982px;top:737px;font-size:21px;line-height:21px;font-weight:bold;color:#7b0b0b;-webkit-text-stroke:0.4px #7b0b0b;transform:scale(1.15,0.86);transform-origin:0 0">-</div>
<div class="t " style="left:1001px;top:737px;font-size:21px;line-height:21px;font-weight:bold;color:#7b0b0b;-webkit-text-stroke:0.4px #7b0b0b;transform:scale(1.15,0.86);transform-origin:0 0">I</div>
<div class="t " style="left:1007px;top:737px;font-size:21px;line-height:21px;font-weight:bold;color:#7b0b0b;-webkit-text-stroke:0.4px #7b0b0b;transform:scale(1.15,0.86);transform-origin:0 0">T</div>
<div class="t " style="left:1019px;top:737px;font-size:21px;line-height:21px;font-weight:bold;color:#7b0b0b;-webkit-text-stroke:0.4px #7b0b0b;transform:scale(1.15,0.86);transform-origin:0 0">知</div>
<div class="t " style="left:1042px;top:737px;font-size:21px;line-height:21px;font-weight:bold;color:#7b0b0b;-webkit-text-stroke:0.4px #7b0b0b;transform:scale(1.15,0.86);transform-origin:0 0">识</div>
<div class="t " style="left:1067.5px;top:737px;font-size:21px;line-height:21px;font-weight:bold;color:#7b0b0b;-webkit-text-stroke:0.4px #7b0b0b;transform:scale(1.15,0.86);transform-origin:0 0">网</div>
<div class="t " style="left:1089px;top:737px;font-size:21px;line-height:21px;font-weight:bold;color:#7b0b0b;-webkit-text-stroke:0.4px #7b0b0b;transform:scale(1.15,0.86);transform-origin:0 0">！</div>
</body></html>
